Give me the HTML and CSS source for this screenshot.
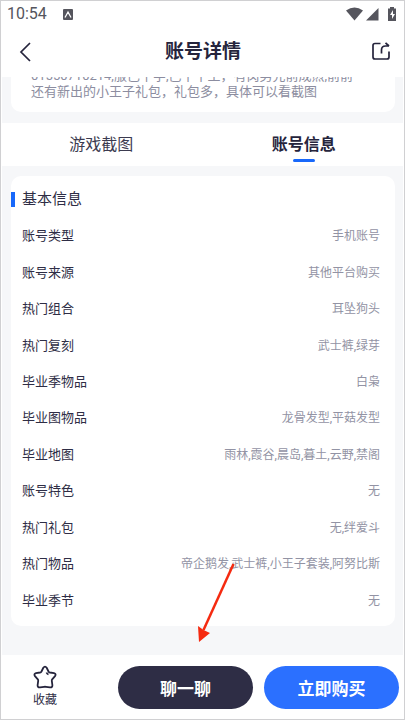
FILE: index.html
```html
<!DOCTYPE html>
<html lang="zh-CN">
<head>
<meta charset="utf-8">
<meta name="viewport" content="width=device-width, initial-scale=1">
<title>账号详情</title>
<link rel="stylesheet" href="styles.css">
</head>
<body>
<div class="app">
  <div class="status">
    <span class="time">10:54</span>
    <svg class="app-badge" viewBox="0 0 10 11" aria-hidden="true"><rect width="10" height="11" rx="1" fill="#55555d"/><path d="M2 8.500L5 3l3 5.500M5 3v2" fill="none" stroke="#fff" stroke-width="1.300"/></svg>
    <svg class="signals" viewBox="0 0 52 16" aria-hidden="true">
      <path d="M0 4.500Q8.500-1.500 17 4.500L8.500 14.500Z" fill="#55555d"/>
      <path d="M20 14.500L32.500 2v12.500Z" fill="#55555d"/>
      <path d="M44 1h4v1.500h2V15h-8V2.500h2Z" fill="#55555d"/>
      <path d="M47 4l-3 5h2v4l3-5h-2Z" fill="#fff"/>
    </svg>
  </div>
  <header class="header">
    <button class="icon-btn" type="button" aria-label="返回"><svg viewBox="0 0 20 20"><path d="M15 1L6 10l9 9"/></svg></button>
    <h1>账号详情</h1>
    <button class="icon-btn" type="button" aria-label="分享"><svg viewBox="0 0 20 20"><path d="M9.500 1.500H4Q2 1.500 2 3.500V15q0 2 2 2H16q2 0 2-2V9.500M10.500 11.500V8q0-4 4-4H18M14.500 .8L18 4"/></svg></button>
  </header>
  <main class="content">
    <section class="intro">
      <p>01550710214,服已十字,已十十主，有岗男先前成煎,前前</p>
      <p>还有新出的小王子礼包，礼包多，具体可以看截图</p>
    </section>
    <nav class="tabs">
      <a href="#shots">游戏截图</a>
      <a href="#info" class="active" aria-current="page">账号信息</a>
    </nav>
    <section class="card" id="info">
      <h2>基本信息</h2>
      <dl>
        <div><dt>账号类型</dt><dd>手机账号</dd></div>
        <div><dt>账号来源</dt><dd>其他平台购买</dd></div>
        <div><dt>热门组合</dt><dd>耳坠狗头</dd></div>
        <div><dt>热门复刻</dt><dd>武士裤,绿芽</dd></div>
        <div><dt>毕业季物品</dt><dd>白枭</dd></div>
        <div><dt>毕业图物品</dt><dd>龙骨发型,平菇发型</dd></div>
        <div><dt>毕业地图</dt><dd>雨林,霞谷,晨岛,暮土,云野,禁阁</dd></div>
        <div><dt>账号特色</dt><dd>无</dd></div>
        <div><dt>热门礼包</dt><dd>无,绊爱斗</dd></div>
        <div><dt>热门物品</dt><dd>帝企鹅发,武士裤,小王子套装,阿努比斯</dd></div>
        <div><dt>毕业季节</dt><dd>无</dd></div>
      </dl>
    </section>
  </main>
  <footer class="actions">
    <button class="favorite" type="button">
      <svg viewBox="0 0 24 24" aria-hidden="true"><path d="M10.300 2.800Q12 .5 13.700 2.800L15.500 6.500Q16 7.300 17 7.500L21 8.200Q23.600 9 22 11.200L19.200 14.300Q18.700 15 18.800 16L19.400 20.200Q19.400 22.700 17 22.300L13 21.800Q12 21.700 11 21.800L7 22.300Q4.600 22.700 4.600 20.200L5.200 16Q5.300 15 4.800 14.300L2 11.200Q.4 9 3 8.200L7 7.500Q8 7.300 8.500 6.500ZM13.500 7.500q.5 1.500 2 2"/></svg>
      <span>收藏</span>
    </button>
    <button class="pill chat" type="button">聊一聊</button>
    <button class="pill buy" type="button">立即购买</button>
  </footer>
  <svg class="pointer" viewBox="0 0 40 80" aria-hidden="true"><path d="M38.500 1L8.500 67" stroke="#f52a10" stroke-width="2.500" fill="none"/><path d="M4 79L3 63l5.500 4L15 70Z" fill="#f52a10"/></svg>
</div>
</body>
</html>
```
FILE: styles.css
```css
* {
  box-sizing: border-box;
}

body,
h1,
h2,
p,
dl,
dd {
  margin: 0;
}

body {
  font-family: Roboto, "Noto Sans CJK SC", sans-serif;
  color: #2e2d45;
  background: #fff;
}

button {
  padding: 0;
  border: 0;
  background: none;
  color: inherit;
  font: inherit;
}

.app {
  position: relative;
  display: flex;
  flex-direction: column;
  min-height: 100vh;
  border: 1px solid #d0d0d2;
}

.status {
  display: flex;
  align-items: center;
  height: 26px;
  padding: 0 6px;
  color: #55555d;
}

.time {
  font-size: 16px;
  line-height: 24px;
}

.app-badge {
  width: 10px;
  height: 11px;
  margin-left: 16px;
}

.signals {
  width: 52px;
  height: 16px;
  margin-left: auto;
}

.header {
  display: flex;
  align-items: center;
  justify-content: space-between;
  height: 50px;
  padding: 0 13px 0 14px;
}

.header h1 {
  color: #25243c;
  font-size: 19px;
  font-weight: 700;
  line-height: 28px;
}

.icon-btn svg {
  display: block;
  width: 20px;
  height: 20px;
  fill: none;
  stroke: #25243c;
  stroke-width: 1.7;
}

.content {
  flex: 1;
  display: flex;
  flex-direction: column;
  margin: 0 1px;
  background: #f6f7f9;
}

.intro {
  display: flex;
  flex-direction: column;
  justify-content: flex-end;
  height: 35px;
  margin: 0 8px 11px 9px;
  padding: 0 20px 12px;
  overflow: hidden;
  border-radius: 0 0 10px 10px;
  background: #fff;
  color: #8c8da0;
  font-size: 13px;
  line-height: 16px;
  white-space: nowrap;
}

.tabs {
  display: grid;
  grid-template-columns: 1fr 1fr;
  column-gap: 4px;
  height: 43px;
  background: #fff;
  text-align: center;
  font-size: 16px;
  line-height: 43px;
}

.tabs a {
  position: relative;
  color: #3c3b50;
  text-decoration: none;
}

.tabs .active {
  color: #25243c;
  font-weight: 700;
}

.active::after {
  content: "";
  position: absolute;
  bottom: 4px;
  left: calc(50% - 11px);
  width: 22px;
  height: 3px;
  border-radius: 2px;
  background: #1868fa;
}

.card {
  flex: 1;
  display: flex;
  flex-direction: column;
  margin: 10px 8px 29px 9px;
  padding: 12px 0 7px;
  border-radius: 10px;
  background: #fff;
}

.card h2 {
  display: flex;
  align-items: center;
  gap: 7px;
  font-size: 15px;
  font-weight: 400;
  line-height: 22px;
}

.card h2::before {
  content: "";
  width: 4px;
  height: 15px;
  background: #1868fa;
}

.card dl {
  flex: 1;
  display: flex;
  flex-direction: column;
  margin-top: 8px;
  padding: 0 15px 0 11px;
}

.card dl div {
  flex: 1;
  display: flex;
  align-items: center;
  justify-content: space-between;
}

dt {
  font-size: 13px;
  line-height: 20px;
}

dd {
  color: #9293a4;
  font-size: 12px;
  line-height: 20px;
}

.actions {
  display: grid;
  grid-template-columns: 1fr 135px 135px;
  align-items: center;
  gap: 11px;
  height: 64px;
  padding: 0 5px 0 10px;
}

.favorite {
  display: flex;
  flex-direction: column;
  align-items: center;
  justify-self: start;
  margin-left: 22px;
  font-size: 12px;
  line-height: 18px;
}

.favorite svg {
  width: 24px;
  height: 24px;
  margin-bottom: 2px;
  fill: none;
  stroke: #25243c;
  stroke-width: 1.8;
}

.pill {
  height: 43px;
  border-radius: 22px;
  color: #fff;
  font-size: 17px;
  font-weight: 700;
}

.chat {
  background: #2e2d45;
}

.buy {
  background: #2b70ff;
}

.pointer {
  position: absolute;
  top: 562px;
  left: 194px;
  width: 40px;
  height: 80px;
}
```
